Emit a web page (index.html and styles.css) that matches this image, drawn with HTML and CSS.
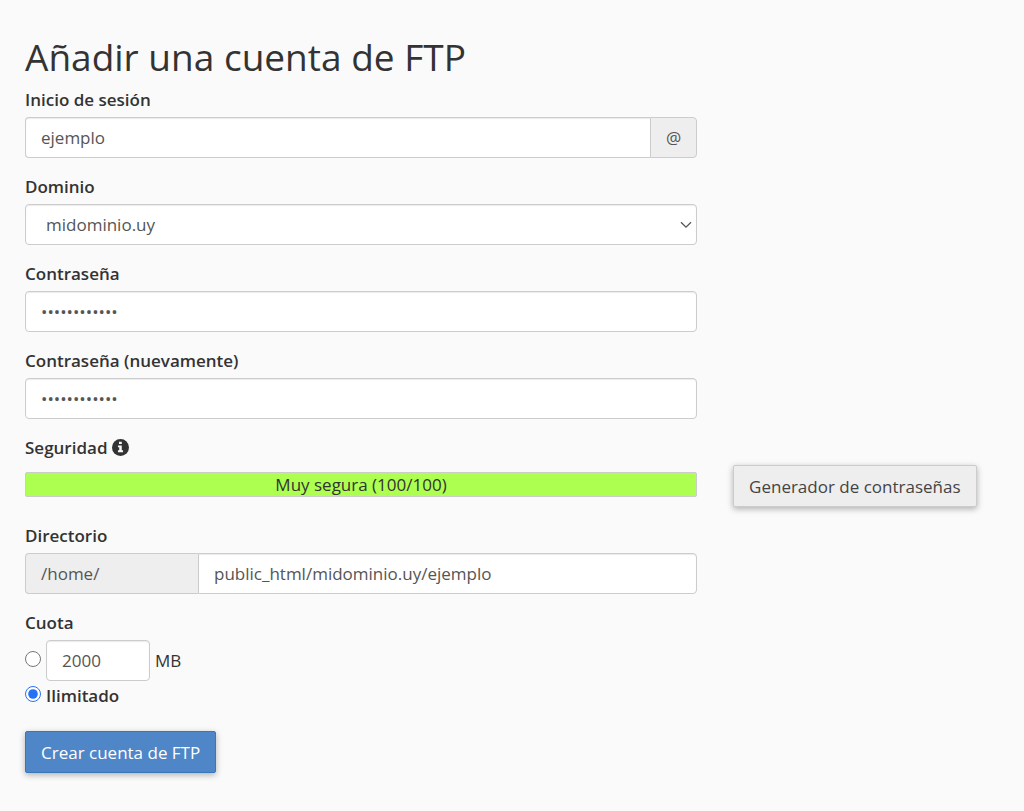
FILE: index.html
```html
<!DOCTYPE html>
<html lang="es">
<head>
    <meta charset="UTF-8">
    <meta name="viewport" content="width=device-width, initial-scale=1.0">
    <title>Añadir una cuenta de FTP</title>
    <link rel="stylesheet" href="styles.css">
</head>
<body>
    <main class="page">
        <h1>Añadir una cuenta de FTP</h1>
        <form id="ftp-form">
            <div class="form-group">
                <label for="login">Inicio de sesión</label>
                <div class="input-group">
                    <input type="text" class="form-control" id="login" value="ejemplo">
                    <span class="addon">@</span>
                </div>
            </div>
            <div class="form-group">
                <label for="domain">Dominio</label>
                <div class="select-wrap">
                    <select class="form-control" id="domain">
                        <option>midominio.uy</option>
                    </select>
                    <svg class="chevron" viewBox="0 0 12 8" aria-hidden="true">
                        <path d="M1 1.2 L6 6.2 L11 1.2" fill="none" stroke="#555" stroke-width="1.3"/>
                    </svg>
                </div>
            </div>
            <div class="form-group">
                <label for="password">Contraseña</label>
                <input type="password" class="form-control" id="password" value="abcdefghijkl">
            </div>
            <div class="form-group">
                <label for="password2">Contraseña (nuevamente)</label>
                <input type="password" class="form-control" id="password2" value="abcdefghijkl">
            </div>
            <div class="form-group strength-row">
                <div class="strength">
                    <span class="label">Seguridad
                        <svg class="info" viewBox="0 0 16 16" aria-hidden="true">
                            <circle cx="8" cy="8" r="8" fill="#333"/>
                            <path d="M6.6 2.6h2.6v2.1H6.6zM5.6 6h3.6v4.7h1.2v1.7H5.6v-1.7h1.2V7.7H5.6z" fill="#fafafa"/>
                        </svg>
                    </span>
                    <div class="meter">Muy segura (100/100)</div>
                </div>
                <button type="button" class="btn">Generador de contraseñas</button>
            </div>
            <div class="form-group">
                <label for="directory">Directorio</label>
                <div class="input-group">
                    <span class="addon addon-home">/home/</span>
                    <input type="text" class="form-control" id="directory" value="public_html/midominio.uy/ejemplo">
                </div>
            </div>
            <div class="form-group quota">
                <span class="label">Cuota</span>
                <div class="option">
                    <input type="radio" name="quota" id="limited" aria-label="Cuota en MB">
                    <input type="text" class="form-control quota-size" id="quota-size" value="2000" aria-label="Cuota">
                    <label class="unit" for="quota-size">MB</label>
                </div>
                <div class="option">
                    <input type="radio" name="quota" id="unlimited" checked>
                    <label for="unlimited">Ilimitado</label>
                </div>
            </div>
            <button type="submit" class="btn btn-primary">Crear cuenta de FTP</button>
        </form>
    </main>
</body>
</html>
```
FILE: styles.css
```css
* {
    box-sizing: border-box;
}
body {
    margin: 0;
    background-color: #fafafa;
    color: #333;
    font-family: "Open Sans", "Noto Sans", sans-serif;
    font-size: 17px;
    line-height: 24px;
}
.page {
    padding: 36px 25px;
}
h1 {
    margin: 0 0 10px;
    font-size: 37px;
    font-weight: 500;
    line-height: 42px;
}
.form-group {
    width: 69%;
    margin-bottom: 17px;
}
label, .label {
    display: block;
    margin-bottom: 5px;
    font-weight: 600;
}

/* inputs */
.form-control {
    display: block;
    width: 100%;
    height: 41px;
    margin: 0;
    padding: 0 15px;
    background-color: #fff;
    border: 1px solid #ccc;
    border-radius: 4px;
    box-shadow: inset 0 1px 1px rgba(0, 0, 0, 0.08);
    color: #555;
    font-family: inherit;
    font-size: 17px;
}
.input-group {
    display: flex;
}
.input-group .form-control {
    flex: 1;
    min-width: 0;
}
.input-group > :first-child {
    border-right: none;
    border-radius: 4px 0 0 4px;
}
.input-group > :last-child {
    border-radius: 0 4px 4px 0;
}
.addon {
    width: 47px;
    background-color: #eee;
    border: 1px solid #ccc;
    color: #555;
    line-height: 39px;
    text-align: center;
}
.addon-home {
    width: 173px;
    padding-left: 15px;
    text-align: left;
}
.select-wrap {
    position: relative;
}
select.form-control {
    appearance: none;
    padding-left: 20px;
}
.chevron {
    position: absolute;
    top: 17px;
    right: 5px;
    width: 12px;
    height: 8px;
    pointer-events: none;
}

/* password strength */
.strength-row {
    display: flex;
    gap: 36px;
    align-items: flex-end;
    width: 100%;
}
.strength {
    flex: 0 0 69%;
    padding-bottom: 10px;
}
.strength .label {
    margin-bottom: 12px;
}
.info {
    width: 17px;
    height: 17px;
    vertical-align: -2px;
}
.meter {
    height: 25px;
    background-color: #adff50;
    border: 1px solid #ccc;
    border-radius: 2px;
    text-align: center;
}

/* quota */
.quota {
    margin-bottom: 23px;
}
.option {
    display: flex;
    gap: 5px;
    align-items: center;
}
.option + .option {
    margin-top: 3px;
}
.option label {
    margin: 0;
}
.option input[type="radio"] {
    width: 16px;
    height: 16px;
    margin: 0 0 4px;
    accent-color: #2672f5;
}
.quota-size {
    width: 104px;
}
.option .unit {
    font-weight: 400;
}

/* buttons */
.btn {
    height: 42px;
    padding: 0 15px;
    background-color: #eee;
    border: 1px solid #ccc;
    border-radius: 2px;
    box-shadow: 0 2px 6px rgba(0, 0, 0, 0.3);
    color: #444;
    font-family: inherit;
    font-size: 17px;
    white-space: nowrap;
    cursor: pointer;
}
.btn-primary {
    background-color: #4e86c8;
    border-color: #3b76bd;
    color: #fff;
}
```
